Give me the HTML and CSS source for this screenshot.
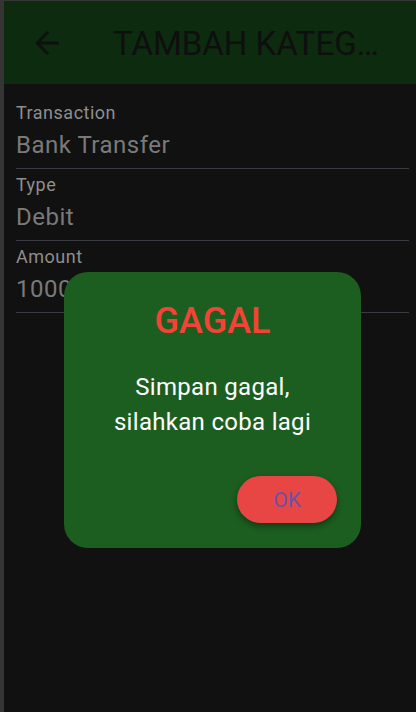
FILE: index.html
```html
<!DOCTYPE html>
<html>
<head>
<meta charset="utf-8">
<link rel="stylesheet" href="styles.css">
</head>
<body>
<div class="frame">
  <header class="appbar">
    <span class="back">
      <svg viewBox="0 0 24 24" width="36" height="36"><path d="M20 11H7.83l5.59-5.59L12 4l-8 8 8 8 1.41-1.41L7.83 13H20v-2z" fill="#101010"/></svg>
    </span>
    <span class="title">TAMBAH KATEG…</span>
  </header>
  <main class="form">
    <div class="field">
      <div class="label">Transaction</div>
      <div class="value">Bank Transfer</div>
    </div>
    <div class="field">
      <div class="label">Type</div>
      <div class="value">Debit</div>
    </div>
    <div class="field">
      <div class="label">Amount</div>
      <div class="value">100000</div>
    </div>
  </main>
  <div class="dialog">
    <div class="dlg-title">GAGAL</div>
    <div class="dlg-text">Simpan gagal,<br>silahkan coba lagi</div>
    <div class="dlg-actions">
      <button class="ok">OK</button>
    </div>
  </div>
</div>
</body>
</html>
```
FILE: styles.css
```css
html, body {
  margin: 0;
  padding: 0;
  background: #111111;
  font-family: Roboto, "Liberation Sans", sans-serif;
}
.frame {
  position: relative;
  width: 416px;
  height: 712px;
  box-sizing: border-box;
  border-left: 4px solid #353535;
  border-top: 1px solid #353535;
  background: #111111;
  overflow: hidden;
}
.appbar {
  height: 83px;
  background: #0c2b0f;
  display: flex;
  align-items: center;
  padding-left: 25px;
  gap: 48px;
}
.back {
  width: 36px;
  height: 36px;
  display: flex;
}
.title {
  font-size: 33px;
  line-height: 40px;
  color: #0f0f0f;
  white-space: nowrap;
  margin-top: 2px;
}
.form {
  padding: 19px 7px 0 12px;
  display: flex;
  flex-direction: column;
  gap: 6px;
}
.field {
  border-bottom: 1px solid #3a3a42;
  padding-bottom: 9px;
  display: flex;
  flex-direction: column;
  gap: 8px;
}
.label {
  font-size: 18px;
  line-height: 20px;
  color: #8e8e8e;
  letter-spacing: 0.5px;
}
.value {
  font-size: 24px;
  line-height: 28px;
  color: #7a7a7a;
  letter-spacing: 0.5px;
}
.dialog {
  position: absolute;
  left: 60px;
  top: 271px;
  width: 297px;
  height: 276px;
  box-sizing: border-box;
  background: #1c5e20;
  border-radius: 24px;
  padding-top: 28px;
  display: flex;
  flex-direction: column;
  align-items: center;
}
.dlg-title {
  font-size: 36px;
  line-height: 42px;
  font-weight: 500;
  color: #f44336;
}
.dlg-text {
  margin-top: 28px;
  font-size: 24px;
  line-height: 35px;
  letter-spacing: 0.3px;
  color: #ffffff;
  text-align: center;
}
.dlg-actions {
  align-self: stretch;
  display: flex;
  justify-content: flex-end;
  padding-right: 24px;
  margin-top: 36px;
}
.ok {
  width: 100px;
  height: 47px;
  border: none;
  border-radius: 24px;
  background: #e84545;
  color: #6a52a8;
  font-family: Roboto, "Liberation Sans", sans-serif;
  font-size: 21px;
  box-shadow: 0 3px 6px rgba(0, 0, 0, 0.4);
  padding: 0;
}
```
